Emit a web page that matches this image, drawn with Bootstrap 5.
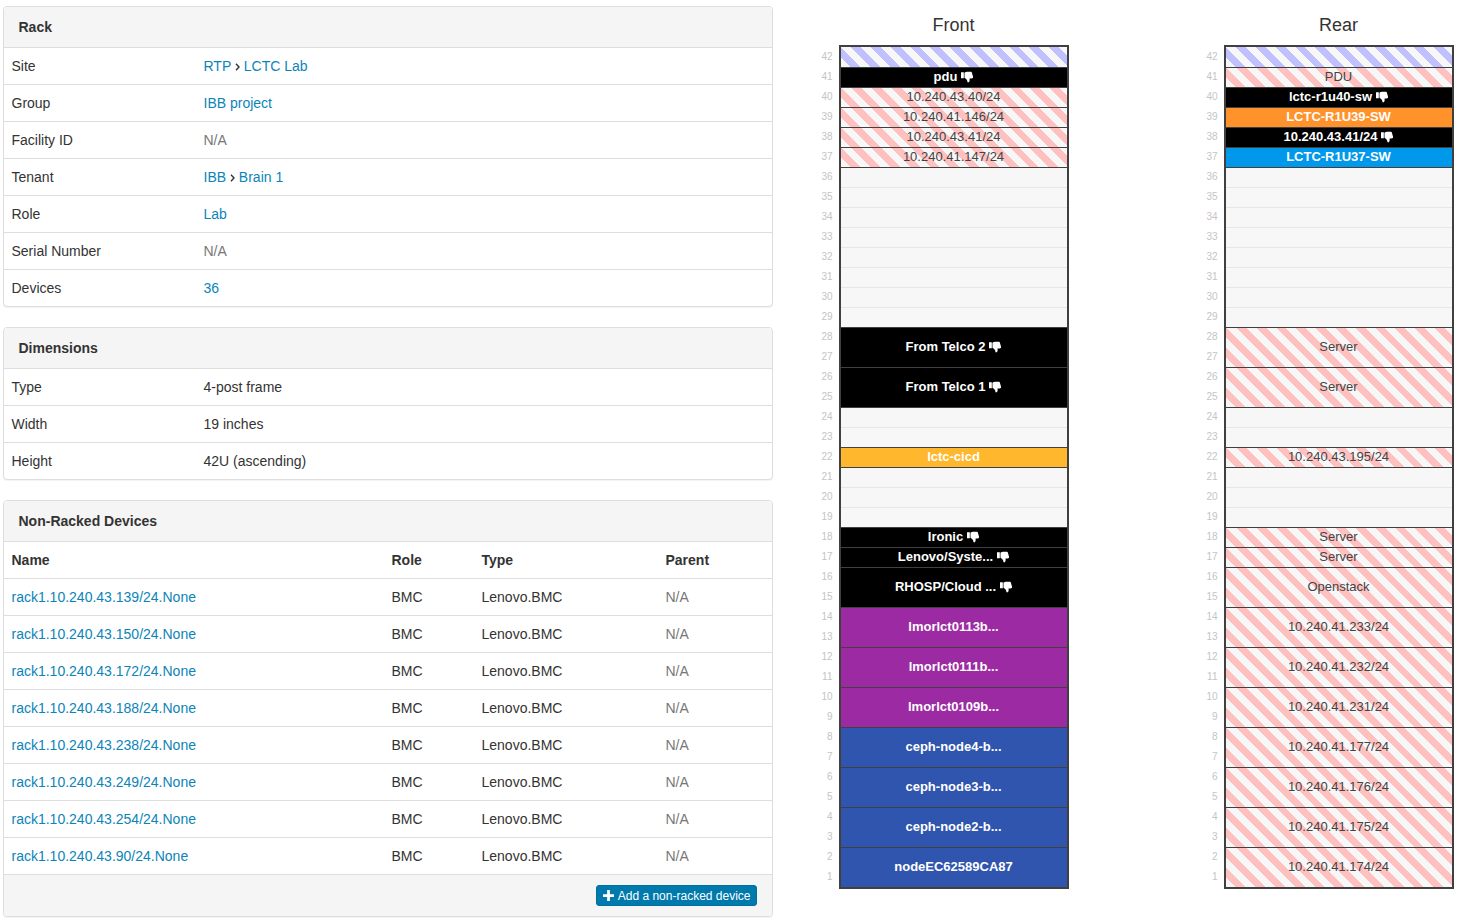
<!DOCTYPE html>
<html lang="en">
<head>
  <meta charset="UTF-8" />
  <title>Rack</title>
  <link href="https://cdn.jsdelivr.net/npm/bootstrap@5.3.2/dist/css/bootstrap.min.css" rel="stylesheet" />
  <style>
    html, body { overflow: hidden; }
    body {
      background: #fff;
      color: #333;
      font-family: "Liberation Sans", Arial, sans-serif;
      font-size: 14px;
      line-height: 20px;
    }
    a { color: #0b84b8; text-decoration: none; }
    .page-wrap { padding: 6px 0 0 2.5px; }
    .left-side { width: 770px; flex: none; }
    .info-panel {
      border: 1px solid #ddd;
      border-radius: 4px;
      box-shadow: 0 1px 1px rgba(0,0,0,.05);
      margin-bottom: 20px;
      overflow: hidden;
    }
    .info-panel .card-header {
      background: #f5f5f5;
      border-bottom: 1px solid #ddd;
      border-radius: 0;
      padding: 10px 15px;
      font-weight: 700;
      color: #333;
    }
    .info-panel .table { margin: 0; color: #333; table-layout: fixed; --bs-table-color: #333; }
    .info-panel .table td, .info-panel .table th {
      padding: 8px;
      border-top: 0;
      border-bottom: 1px solid #ddd;
      font-size: 14px;
      line-height: 20px;
    }
    .info-panel .table tr:last-child td { border-bottom: 0; }
    .info-panel .table.has-foot tr:last-child td { border-bottom: 1px solid #ddd; }
    .col-label { width: 192px; }
    .col-name { width: 380px; }
    .col-role { width: 90px; }
    .col-type { width: 184px; }
    .muted-val { color: #777; }
    .crumb-sep { width: 5px; height: 8px; vertical-align: 0.5px; }
    .panel-foot { background: #f5f5f5; padding: 10px 15px; height: 41px; }
    .add-btn {
      background: #0079ad;
      border: 1px solid #00709f;
      border-radius: 3px;
      color: #fff;
      font-size: 12px;
      line-height: 18px;
      padding: 1px 5px 1px 6px;
    }
    .add-btn:hover { background: #0079ad; color: #fff; }
    .add-btn svg { width: 11px; height: 11px; margin-right: 1.5px; vertical-align: -1px; }

    .right-side { padding-left: 36px; gap: 125px; }
    .elev-title { font-size: 18px; line-height: 20px; text-align: center; padding: 9px 0 10px 30px; font-weight: 400; margin: 0; color: #333; }
    .unit-nums { width: 30px; padding-top: 2px; }
    .unit-nums div {
      height: 20px;
      line-height: 20px;
      font-size: 10px;
      color: #c4c4c4;
      text-align: right;
      padding-right: 6px;
    }
    .rack-box {
      width: 230px;
      border: 2px solid #404040;
      background: #f7f7f7;
    }
    .rack-slot {
      display: flex;
      align-items: center;
      justify-content: center;
      font-size: 13px;
      line-height: 15px;
      border-top: 1px solid #404040;
      padding-bottom: 3px;
      color: #fff;
      font-weight: 700;
      white-space: nowrap;
    }
    .rack-slot:first-child { border-top: 0; }
    .rack-slot svg { width: 13px; height: 13px; margin: 2px -1px 0 4px; flex: none; }
    .slot-empty { background: #f7f7f7; }
    .slot-empty.after-empty { border-top-color: #e6e6e6; }
    .slot-res { background: repeating-linear-gradient(45deg, #f7f7f7, #f7f7f7 7px, #c0c0ff 7px, #c0c0ff 14px); }
    .slot-occ { background: repeating-linear-gradient(45deg, #f7f7f7, #f7f7f7 7px, #ffc0c0 7px, #ffc0c0 14px); color: #444; font-weight: 400; }
    .c-black { background: #000; }
    .c-amber { background: #ffb72e; }
    .c-orange { background: #ff922b; }
    .c-azure { background: #0098ea; }
    .c-purple { background: #9c2ba3; }
    .c-blue { background: #2f55ae; }
  </style>
</head>
<body>
  <div class="page-wrap d-flex">
    <div class="left-side">
      <div class="card info-panel">
        <div class="card-header">Rack</div>
        <table class="table">
          <tr><td class="col-label">Site</td><td><a href="#">RTP</a> <svg class="crumb-sep" viewBox="0 0 5 8"><path d="M1 .8 4 4 1 7.2" fill="none" stroke="#333" stroke-width="1.4"/></svg> <a href="#">LCTC Lab</a></td></tr>
          <tr><td>Group</td><td><a href="#">IBB project</a></td></tr>
          <tr><td>Facility ID</td><td class="muted-val">N/A</td></tr>
          <tr><td>Tenant</td><td><a href="#">IBB</a> <svg class="crumb-sep" viewBox="0 0 5 8"><path d="M1 .8 4 4 1 7.2" fill="none" stroke="#333" stroke-width="1.4"/></svg> <a href="#">Brain 1</a></td></tr>
          <tr><td>Role</td><td><a href="#">Lab</a></td></tr>
          <tr><td>Serial Number</td><td class="muted-val">N/A</td></tr>
          <tr><td>Devices</td><td><a href="#">36</a></td></tr>
        </table>
      </div>
      <div class="card info-panel">
        <div class="card-header">Dimensions</div>
        <table class="table">
          <tr><td class="col-label">Type</td><td>4-post frame</td></tr>
          <tr><td>Width</td><td>19 inches</td></tr>
          <tr><td>Height</td><td>42U (ascending)</td></tr>
        </table>
      </div>
      <div class="card info-panel">
        <div class="card-header">Non-Racked Devices</div>
        <table class="table has-foot">
          <tr><th class="col-name">Name</th><th class="col-role">Role</th><th class="col-type">Type</th><th>Parent</th></tr>
          <tbody id="nonRacked"></tbody>
        </table>
        <div class="panel-foot d-flex justify-content-end">
          <a href="#" class="btn add-btn">
            <svg viewBox="0 0 12 12"><path d="M4.5 0h3v4.5H12v3H7.5V12h-3V7.5H0v-3h4.5z" fill="#fff"/></svg>
            Add a non-racked device</a>
        </div>
      </div>
    </div>

    <div class="right-side d-flex">
      <div>
        <h4 class="elev-title">Front</h4>
        <div class="d-flex">
          <div class="unit-nums" data-nums></div>
          <div class="rack-box" id="rackFront"></div>
        </div>
      </div>
      <div>
        <h4 class="elev-title">Rear</h4>
        <div class="d-flex">
          <div class="unit-nums" data-nums></div>
          <div class="rack-box" id="rackRear"></div>
        </div>
      </div>
    </div>
  </div>

  <script src="https://cdn.jsdelivr.net/npm/bootstrap@5.3.2/dist/js/bootstrap.bundle.min.js"></script>
  <script>
    const thumb = '<svg viewBox="0 0 12 12"><path fill="#fff" d="M0 1.2h2.6v5.6H0zM3.2 1.6c1-.5 1.7-.8 3-.8h2.4c.9 0 1.5.4 1.6 1.2l.9 3.4c.2.9-.4 1.5-1.3 1.5H7.9c.1 1.1.2 2.1-.2 2.9-.3.7-1.1.9-1.6.6-.3-.2-.2-.7-.3-1.2-.2-1.3-1.3-2-2.6-2.9z"/></svg>';

    ["139","150","172","188","238","249","254","90"].forEach(n => {
      document.getElementById("nonRacked").insertAdjacentHTML("beforeend",
        `<tr><td><a href="#">rack1.10.240.43.${n}/24.None</a></td><td>BMC</td><td>Lenovo.BMC</td><td class="muted-val">N/A</td></tr>`);
    });

    document.querySelectorAll("[data-nums]").forEach(el => {
      for (let u = 42; u >= 1; u--) el.insertAdjacentHTML("beforeend", `<div>${u}</div>`);
    });

    // [units, css class, label, thumbs-down icon]
    const e = n => Array(n).fill([1, "slot-empty", ""]);
    const occ = (label, n = 1) => [n, "slot-occ", label];
    const dev = (label, cls, n = 1, icon = true) => [n, cls, label, icon];

    const front = [
      [1, "slot-res", ""], dev("pdu", "c-black"),
      occ("10.240.43.40/24"), occ("10.240.41.146/24"), occ("10.240.43.41/24"), occ("10.240.41.147/24"),
      ...e(8),
      dev("From Telco 2", "c-black", 2), dev("From Telco 1", "c-black", 2),
      ...e(2),
      dev("lctc-cicd", "c-amber", 1, false),
      ...e(3),
      dev("Ironic", "c-black"), dev("Lenovo/Syste...", "c-black"), dev("RHOSP/Cloud ...", "c-black", 2),
      dev("lmorlct0113b...", "c-purple", 2, false), dev("lmorlct0111b...", "c-purple", 2, false), dev("lmorlct0109b...", "c-purple", 2, false),
      dev("ceph-node4-b...", "c-blue", 2, false), dev("ceph-node3-b...", "c-blue", 2, false), dev("ceph-node2-b...", "c-blue", 2, false),
      dev("nodeEC62589CA87", "c-blue", 2, false)
    ];
    const rear = [
      [1, "slot-res", ""], occ("PDU"),
      dev("lctc-r1u40-sw", "c-black"), dev("LCTC-R1U39-SW", "c-orange", 1, false),
      dev("10.240.43.41/24", "c-black"), dev("LCTC-R1U37-SW", "c-azure", 1, false),
      ...e(8),
      occ("Server", 2), occ("Server", 2),
      ...e(2),
      occ("10.240.43.195/24"),
      ...e(3),
      occ("Server"), occ("Server"), occ("Openstack", 2),
      occ("10.240.41.233/24", 2), occ("10.240.41.232/24", 2), occ("10.240.41.231/24", 2),
      occ("10.240.41.177/24", 2), occ("10.240.41.176/24", 2), occ("10.240.41.175/24", 2), occ("10.240.41.174/24", 2)
    ];

    function drawRack(id, slots) {
      const box = document.getElementById(id);
      slots.forEach((s, i) => {
        const div = document.createElement("div");
        const prev = slots[i - 1];
        div.className = "rack-slot " + s[1];
        if (s[1] === "slot-empty" && prev && prev[1] === "slot-empty") div.classList.add("after-empty");
        div.style.height = s[0] * 20 + "px";
        div.innerHTML = s[2] + (s[3] ? thumb : "");
        box.appendChild(div);
      });
    }
    drawRack("rackFront", front);
    drawRack("rackRear", rear);
  </script>
</body>
</html>
